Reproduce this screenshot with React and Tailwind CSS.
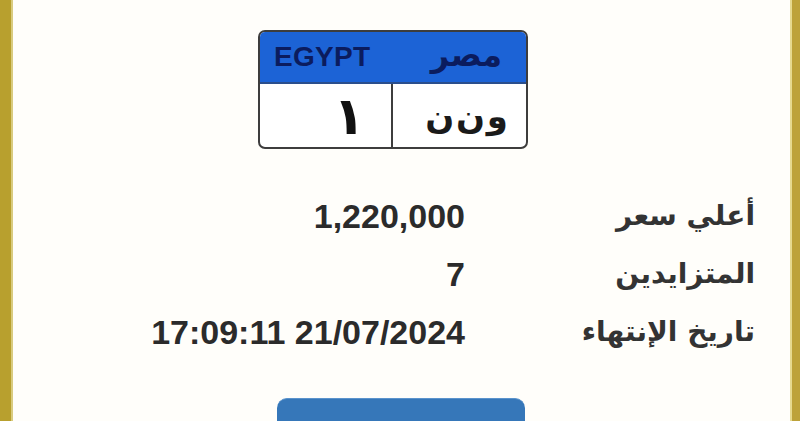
import React from "react";

export default function App() {
  const rows = [
    { label: "أعلي سعر", value: "1,220,000" },
    { label: "المتزايدين", value: "7" },
    { label: "تاريخ الإنتهاء", value: "17:09:11 21/07/2024" },
  ];
  return (
    <div className="flex w-[800px] h-[421px] overflow-hidden bg-white">
      <div className="w-[11px] h-full bg-[#b8a02e]" />
      <div className="w-[2px] h-full bg-[#d9cb7e]" />
      <div className="flex-1 h-full bg-[#fffefa] flex flex-col">
        <div className="flex pl-[245px] pt-[30px]">
          <div className="w-[270px] h-[119px] border-2 border-[#3d3d3d] rounded-[7px] overflow-hidden flex flex-col bg-white">
            <div className="h-[52px] bg-[#1c63d6] border-b-2 border-[#2a4e8c] flex items-center justify-between pl-[14px] pr-[24px]">
              <span className="text-[28px] font-bold text-[#0b1c5e] tracking-[0.3px] leading-none" style={{ fontFamily: '"Liberation Sans", Arial, sans-serif' }}>EGYPT</span>
              <span className="text-[32px] font-bold text-[#0b1c5e] leading-none pb-[4px]" style={{ fontFamily: '"DejaVu Sans", sans-serif' }}>مصر</span>
            </div>
            <div className="flex-1 flex">
              <div className="w-[133px] border-r-2 border-[#3d3d3d] flex items-center justify-end pr-[26px]">
                <span className="text-[52px] font-bold text-[#111] leading-none" style={{ fontFamily: '"DejaVu Sans", sans-serif' }}>١</span>
              </div>
              <div className="flex-1 flex items-center justify-end pr-[18px]">
                <span dir="rtl" className="text-[34px] font-bold text-[#1a1a1a] leading-none tracking-[-1px] [word-spacing:-10px]" style={{ fontFamily: '"DejaVu Sans", sans-serif' }}>و ن ن</span>
              </div>
            </div>
          </div>
        </div>
        <div className="flex flex-col pt-[47px]">
          {rows.map((r) => (
            <div key={r.label} className="h-[58px] flex items-start">
              <div className="w-[452px] text-right text-[34px] leading-[40px] font-bold text-[#2b2b2b]" style={{ fontFamily: '"Liberation Sans", Arial, sans-serif' }}>
                {r.value}
              </div>
              <div dir="rtl" className="w-[290px] text-right text-[28px] leading-[40px] font-bold text-[#333]" style={{ fontFamily: '"DejaVu Sans", sans-serif' }}>
                {r.label}
              </div>
            </div>
          ))}
        </div>
        <div className="flex pl-[264px] pt-[28px]">
          <div className="w-[248px] h-[40px] rounded-[10px] bg-[#3677b9] border-t border-[#5a93cc]" />
        </div>
      </div>
      <div className="w-[2px] h-full bg-[#e6d98f]" />
      <div className="w-[8px] h-full bg-[#bda23a]" />
    </div>
  );
}
